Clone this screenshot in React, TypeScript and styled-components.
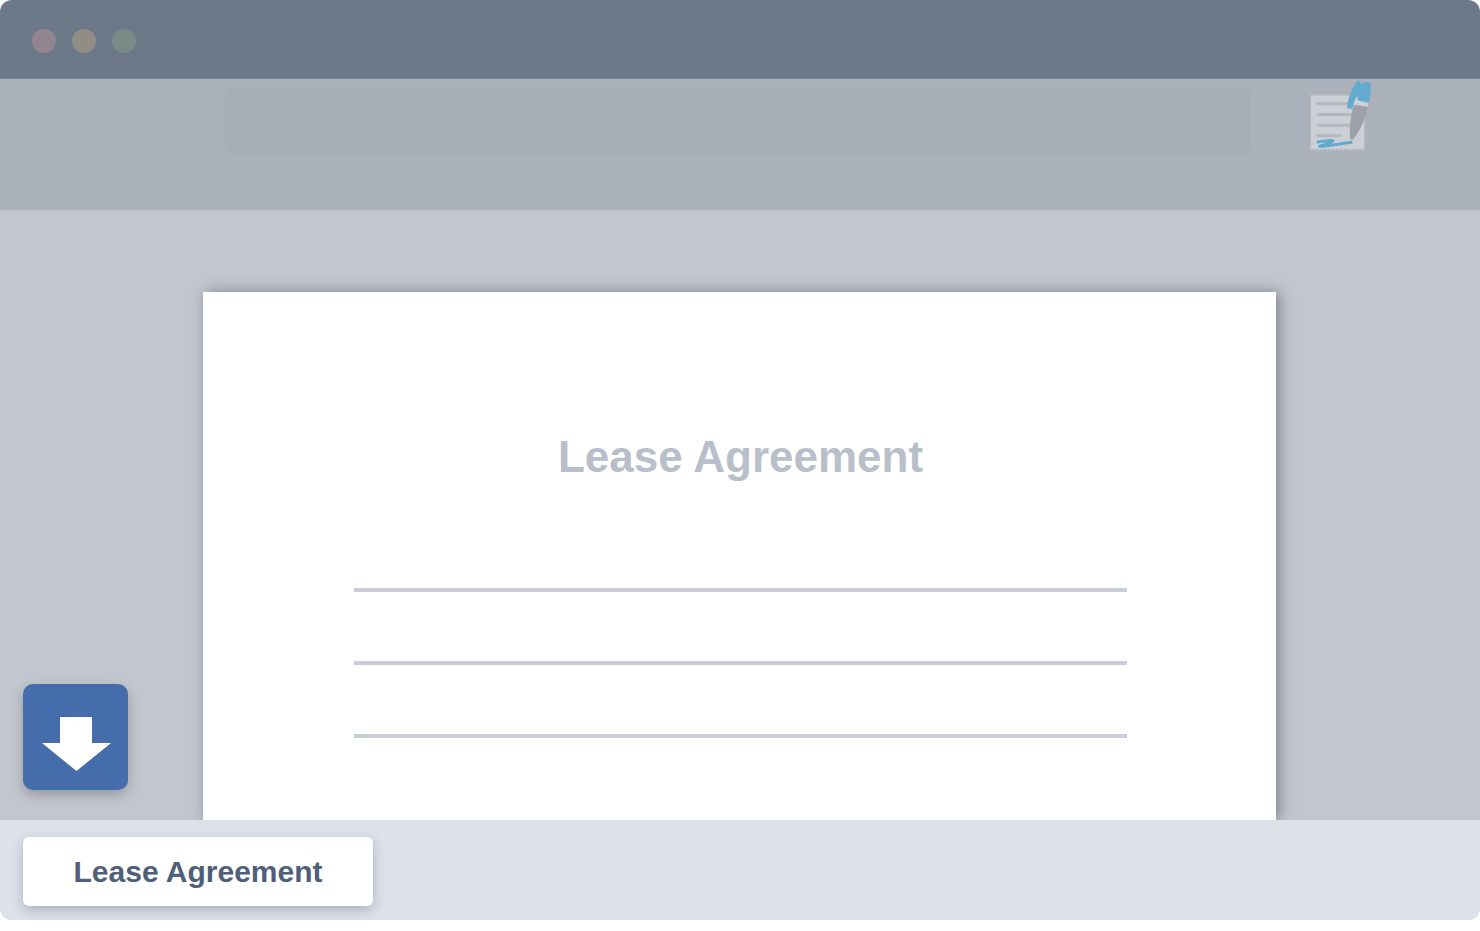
import React from "react";
import styled, { createGlobalStyle } from "styled-components";

const GlobalStyle = createGlobalStyle`
  *, *::before, *::after { box-sizing: border-box; }
  body {
    margin: 0;
    background: #fff;
    font-family: "Liberation Sans", Arial, sans-serif;
  }
`;

const Window = styled.div`
  display: flex;
  flex-direction: column;
  overflow: hidden;
  border-radius: 12px;
  background: #dde1ea;
`;

const TitleBar = styled.header`
  display: flex;
  gap: 16px;
  padding: 29px 32px 25px;
  background: #6c7788;
  border-bottom: 1px solid #7b8595;
`;

const Dot = styled.span<{ $color: string }>`
  width: 24px;
  height: 24px;
  border-radius: 50%;
  background: ${(p) => p.$color};
`;

const Toolbar = styled.div`
  display: flex;
  align-items: flex-start;
  gap: 55px;
  padding: 0 105px 55px 225px;
  background: #aab1bb;
`;

const AddressField = styled.input`
  flex: 1;
  min-width: 0;
  height: 67px;
  margin: 8px 0 0;
  padding: 0 24px;
  border: 0;
  border-radius: 8px;
  background: #a6adb7;
  color: #6c7788;
  font: 28px "Liberation Sans", Arial, sans-serif;
`;

const SignIcon = styled.svg`
  display: block;
  flex: none;
  width: 70px;
  height: 76px;
`;

const Stage = styled.main`
  display: flex;
  padding: 82px 1px 0 0;
  overflow: hidden;
  background: #c2c6ce;
`;

const Side = styled.div`
  display: flex;
  flex: 1;
  align-items: flex-end;
  padding: 0 0 30px 23px;
`;

const DownloadButton = styled.button`
  display: grid;
  place-items: center;
  width: 105px;
  height: 106px;
  padding: 0;
  border: 0;
  border-radius: 10px;
  background: #456dab;
  box-shadow: 0 5px 12px rgba(70, 70, 80, 0.35);
  cursor: pointer;
`;

const Arrow = styled.svg`
  display: block;
  width: 105px;
  height: 106px;
`;

const Paper = styled.article`
  display: flex;
  flex-direction: column;
  width: 72.5%;
  padding: 140px 149px 82px 151px;
  background: #fff;
  box-shadow: 3px 0 13px rgba(60, 64, 78, 0.5);
`;

const Heading = styled.h1`
  margin: 0 0 106px;
  color: #b8bfca;
  font-size: 44px;
  line-height: 50px;
  text-align: center;
`;

const Lines = styled.div`
  display: flex;
  flex-direction: column;
  gap: 69px;
`;

const Line = styled.div`
  height: 4px;
  background: #c7cddb;
`;

const Shelf = styled.footer`
  display: flex;
  padding: 17px 23px 14px;
  background: #dde1ea;
`;

const FileButton = styled.button`
  width: 350px;
  height: 69px;
  padding: 0;
  border: 0;
  border-radius: 6px;
  background: #fff;
  box-shadow: 0 4px 12px rgba(60, 64, 78, 0.3);
  color: #505f79;
  font: bold 30px/34px "Liberation Sans", Arial, sans-serif;
  cursor: pointer;
`;

const dots = ["#928590", "#928d84", "#788b86"];

function SignatureIcon() {
  return (
    <SignIcon viewBox="45 27 210 228" aria-hidden="true">
      <path d="M61 75H224V237H61Z" fill="#cccfd5" />
      <path d="M61 238V75H224V238" fill="none" stroke="#b7babf" strokeWidth="4" />
      <path d="M60 239H226" stroke="#bfc2c7" strokeWidth="6" strokeDasharray="7 5" />
      <path d="M80 101H192M80 133.500H184M80 165.500H182M80 197.500H154" stroke="#b4b7bc" strokeWidth="9" />
      <path
        d="M80 217C98 213 116 209 129 212C124 219 104 223 88 229C116 227 145 222 187 217"
        fill="none"
        stroke="#62abcf"
        strokeWidth="9"
        strokeLinejoin="round"
      />
      <path d="M195 98L234 108C227 145 211 181 190 208L184 211L180 205C178 171 180 132 195 98Z" fill="#9da2aa" />
      <path d="M193 90L236 98L234 110L190 104Z" fill="#cdd2da" />
      <path
        d="M171 115C173 84 185 55 202 32L210 33L213 43L225 35L242 38C243 58 241 78 237 99L203 91L202 76C195 87 190 102 187 117Z"
        fill="#62abcf"
      />
    </SignIcon>
  );
}

export default function App() {
  return (
    <>
      <GlobalStyle />
      <Window>
        <TitleBar>
          {dots.map((color) => (
            <Dot key={color} $color={color} />
          ))}
        </TitleBar>
        <Toolbar>
          <AddressField type="text" aria-label="Address" />
          <SignatureIcon />
        </Toolbar>
        <Stage>
          <Side>
            <DownloadButton type="button" aria-label="Download">
              <Arrow viewBox="0 0 105 106" aria-hidden="true">
                <path d="M37 33H69V59H88L53.500 87L19 59H37Z" fill="#fff" />
              </Arrow>
            </DownloadButton>
          </Side>
          <Paper>
            <Heading>Lease Agreement</Heading>
            <Lines>
              <Line />
              <Line />
              <Line />
            </Lines>
          </Paper>
          <Side />
        </Stage>
        <Shelf>
          <FileButton type="button">Lease Agreement</FileButton>
        </Shelf>
      </Window>
    </>
  );
}
